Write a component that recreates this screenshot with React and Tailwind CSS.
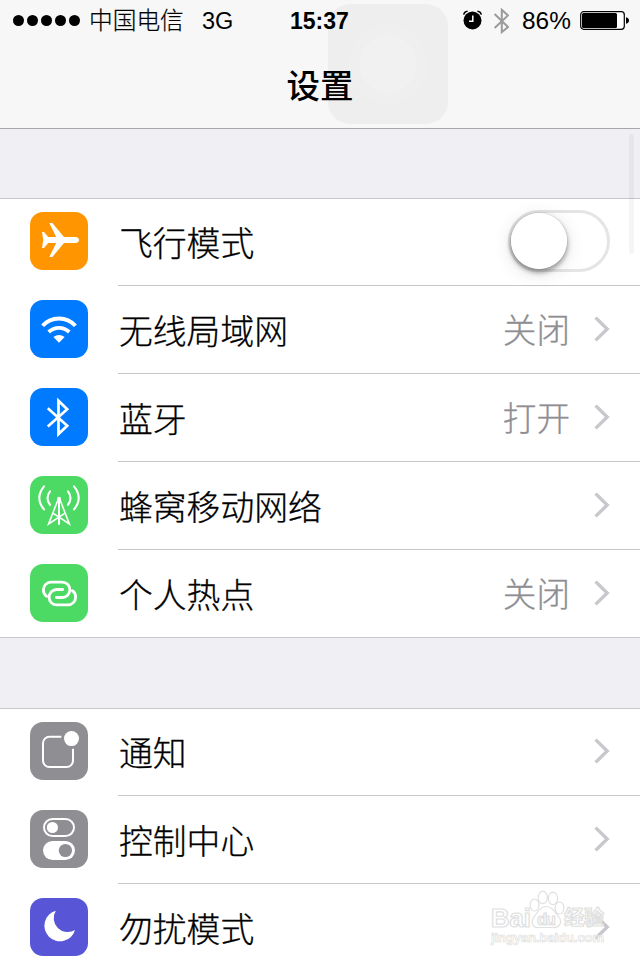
// App.jsx
const AirplaneIcon = () => (
  <path
    d="M12 20H14L18.2 25H26.2L19.3 11H22.4L34 25H45.6C47.8 25 49 26.4 49 28S47.8 31 45.6 31H34L22.4 45H19.3L26.2 31H18.2L14 36H12L13.2 28Z"
    fill="#fff"
  />
);

const WifiIcon = () => (
  <>
    <path d="M12.6 25.8A22 22 0 0 1 45.4 25.8M18.7 32A14.8 14.8 0 0 1 39.3 32" fill="none" stroke="#fff" strokeWidth="3.9" />
    <path d="M23.4 37Q29 32.8 34.6 37L29 42.8Z" fill="#fff" />
  </>
);

const BluetoothIcon = () => (
  <path d="M17.8 20.3L37.2 37.7L28.5 46V12.8L37.2 21.3L17.8 38.6" fill="none" stroke="#fff" strokeWidth="2.7" />
);

const CellularIcon = () => (
  <g fill="none" stroke="#fff" strokeWidth="2.1" strokeLinecap="round">
    <path d="M14 10.4Q4.6 22 14 33.4M20 15.4Q15 22 20 28.8M44 10.4Q53.4 22 44 33.4M38 15.4Q43 22 38 28.8" />
    <path d="M28.3 23L18.6 48L34.3 37.6M29.7 23L39.4 48L23.7 37.6" strokeWidth="1.6" />
    <path d="M29 23V48" strokeWidth="2" />
    <circle cx="29" cy="22.8" r="2" fill="#fff" stroke="none" />
  </g>
);

const HotspotIcon = () => (
  <g fill="none" stroke="#fff" strokeWidth="2.8">
    <path d="M16.6 32.2C14.5 31 13.4 28.6 13.4 25.8A7.7 7.7 0 0 1 21 18.1H32.2A7.7 7.7 0 0 1 32.2 33.5H26.4" strokeLinecap="round" />
    <path
      d="M16.6 32.2C14.5 31 13.4 28.6 13.4 25.8A7.7 7.7 0 0 1 21 18.1H32.2A7.7 7.7 0 0 1 32.2 33.5H26.4"
      strokeLinecap="round"
      transform="rotate(180 29.5 29.5)"
    />
  </g>
);

const NotificationsIcon = () => (
  <>
    <path d="M31.3 14.8H19.5A6.4 6.4 0 0 0 13 21.2V38.6A6.4 6.4 0 0 0 19.4 45H36.6A6.4 6.4 0 0 0 43 38.6V26.7" fill="none" stroke="#fff" strokeWidth="2" />
    <circle cx="41.5" cy="16.6" r="7.5" fill="#fff" />
  </>
);

const ControlCenterIcon = () => (
  <>
    <rect x="14" y="9" width="30" height="17" rx="8.5" fill="none" stroke="#fff" strokeWidth="2" />
    <circle cx="22.4" cy="17.5" r="5.6" fill="#fff" />
    <rect x="13" y="31" width="32" height="19" rx="9.5" fill="#fff" />
    <circle cx="35.4" cy="40.5" r="6.6" fill="#8e8e93" />
  </>
);

const MoonIcon = () => (
  <path d="M25.8 12.7A15.6 15.6 0 1 0 45 32A14 14 0 0 1 25.8 12.7Z" fill="#fff" />
);

const groups = [
  [
    { label: '飞行模式', color: 'bg-[#ff9500]', Icon: AirplaneIcon, toggle: true },
    { label: '无线局域网', color: 'bg-[#007aff]', Icon: WifiIcon, value: '关闭' },
    { label: '蓝牙', color: 'bg-[#007aff]', Icon: BluetoothIcon, value: '打开' },
    { label: '蜂窝移动网络', color: 'bg-[#4cd964]', Icon: CellularIcon },
    { label: '个人热点', color: 'bg-[#4cd964]', Icon: HotspotIcon, value: '关闭' },
  ],
  [
    { label: '通知', color: 'bg-[#8e8e93]', Icon: NotificationsIcon },
    { label: '控制中心', color: 'bg-[#8e8e93]', Icon: ControlCenterIcon },
    { label: '勿扰模式', color: 'bg-[#5856d6]', Icon: MoonIcon },
  ],
];

const Toggle = () => (
  <div className="mr-[30px] -mt-0.5 h-[62px] w-[102px] rounded-full border-[3px] border-[#e5e5e5]">
    <div className="-ml-px -mt-px size-[58px] rounded-full border border-black/5 bg-white bg-clip-padding shadow-[0_3px_4px_rgba(0,0,0,0.3),0_4px_18px_rgba(0,0,0,0.12)]" />
  </div>
);

const Chevron = () => (
  <svg className="ml-6 mr-[30px] mt-4 h-[26px] w-4" viewBox="0 0 16 26" fill="none" stroke="#c7c7cc" strokeWidth="3.4">
    <path d="M1.6 1.6L13.2 13L1.6 24.4" />
  </svg>
);

const Row = ({ label, color, Icon, value, toggle }) => (
  <li className="group flex h-[88px] pl-[30px] pt-3.5 first:h-[87px] first:pt-[13px] last:h-[87px]">
    <div className={`size-[58px] shrink-0 rounded-[13px] ${color}`}>
      <svg className="size-[58px]" viewBox="0 0 58 58">
        <Icon />
      </svg>
    </div>
    <div className="-mt-3.5 ml-[30px] flex grow border-b border-[#c8c7cc] pt-3.5 group-first:-mt-[13px] group-first:pt-[13px] group-last:border-transparent">
      <span className="ml-px grow text-[33.8px] leading-[64px] [-webkit-text-stroke:0.3px]">{label}</span>
      {value && <span className="text-[33.6px] leading-[64px] text-[#8e8e93] [-webkit-text-stroke:0.3px]">{value}</span>}
      {toggle ? <Toggle /> : <Chevron />}
    </div>
  </li>
);

const StatusBar = () => (
  <div className="relative flex h-10 items-center text-2xl leading-10">
    <div className="flex gap-[3px] pl-[13px]">
      {[0, 1, 2, 3, 4].map((dot) => (
        <i key={dot} className="size-[11px] rounded-full bg-black" />
      ))}
    </div>
    <span className="ml-[9px] mt-0.5 w-[113px] text-[23.7px] [-webkit-text-stroke:0.2px]">中国电信</span>
    <span className="mt-0.5 w-[88px] text-[23.5px]">3G</span>
    <span className="mt-0.5 w-[172px] text-[23px] font-bold">15:37</span>
    <svg className="h-[22px] w-5" viewBox="0 0 20 22">
      <circle cx="10.5" cy="11.5" r="9" />
      <path d="M1.8 5.8Q2 2.6 5.6 2.2M19.2 5.8Q19 2.6 15.4 2.2" fill="none" stroke="#000" strokeWidth="1.4" />
      <path d="M10.8 6.5V12.2H7" fill="none" stroke="#fff" strokeWidth="1.5" />
    </svg>
    <svg className="ml-[11px] mt-0.5 h-7 w-4" viewBox="0 0 16 28" fill="none" stroke="#9b9b9b" strokeWidth="2">
      <path d="M1.6 7L15 20L8.8 25.2V2.8L15 8.4L1.6 21" />
    </svg>
    <span className="ml-[13px] mt-0.5 w-[58px] text-[24.4px]">86%</span>
    <svg className="h-5 w-[50px]" viewBox="0 0 50 20">
      <rect x="0.7" y="1.7" width="43.6" height="17.6" rx="3" fill="#fff" stroke="#000" strokeWidth="1.2" />
      <rect x="2" y="3" width="35" height="15" rx="1.5" />
      <path d="M46 7.2Q49 8 49 10.5T46 13.8Z" />
    </svg>
  </div>
);

const Watermark = () => (
  <svg className="absolute left-[488px] top-[888px] h-16 w-32" viewBox="0 0 128 64" fill="#fff" stroke="#e0e0e0" strokeWidth="1.2" fontFamily="Liberation Sans, Noto Sans CJK SC, sans-serif" fontWeight="700">
    <text x="3" y="39" fontSize="25" textLength="40" lengthAdjust="spacingAndGlyphs">Bai</text>
    <path d="M58 18.5C64 18.5 67 24 71 29C75 35 71 40 65 39.5H51C45 40 42 35 46 29C50 24 52 18.5 58 18.5Z" />
    <ellipse cx="46.5" cy="17" rx="4.4" ry="6" />
    <ellipse cx="54.8" cy="9.4" rx="4.6" ry="6.2" />
    <ellipse cx="65" cy="10.4" rx="4.6" ry="6.2" />
    <ellipse cx="71.5" cy="20" rx="4.4" ry="6" />
    <text x="49" y="37" fontSize="17" textLength="19">du</text>
    <text x="76" y="37" fontSize="20" textLength="40" fillOpacity="0.6">经验</text>
    <text x="3" y="54" fontSize="13" textLength="113" strokeWidth="0.7" fillOpacity="0.6">jingyan.baidu.com</text>
  </svg>
);

export default function App() {
  return (
    <div className="relative h-[960px] w-[640px] overflow-hidden bg-[#efeff4] font-['Liberation_Sans','Noto_Sans_CJK_SC',sans-serif] font-light text-black">
      <header className="relative h-[129px] border-b border-[#a8a8ab] bg-[#f7f7f7]">
        {/* Floating touch button, faded out */}
        <div className="absolute left-[328px] top-1 flex size-[120px] items-center justify-center rounded-[22px] bg-[#eeeeee]">
          <div className="flex size-20 items-center justify-center rounded-full bg-[#efefef]">
            <div className="size-[58px] rounded-full bg-[#f1f1f1]" />
          </div>
        </div>
        <StatusBar />
        <h1 className="relative text-center text-[33.5px] font-medium leading-[93px]">设置</h1>
      </header>

      <main>
        {groups.map((rows, index) => (
          <ul key={index} className="mt-[69px] border-y border-[#c8c7cc] bg-white last:mt-[70px]">
            {rows.map((row) => (
              <Row key={row.label} {...row} />
            ))}
          </ul>
        ))}
      </main>

      {/* Scroll indicator */}
      <div className="absolute left-[629px] top-[134px] h-[120px] w-[5px] rounded-full bg-black/4" />
      <Watermark />
    </div>
  );
}
